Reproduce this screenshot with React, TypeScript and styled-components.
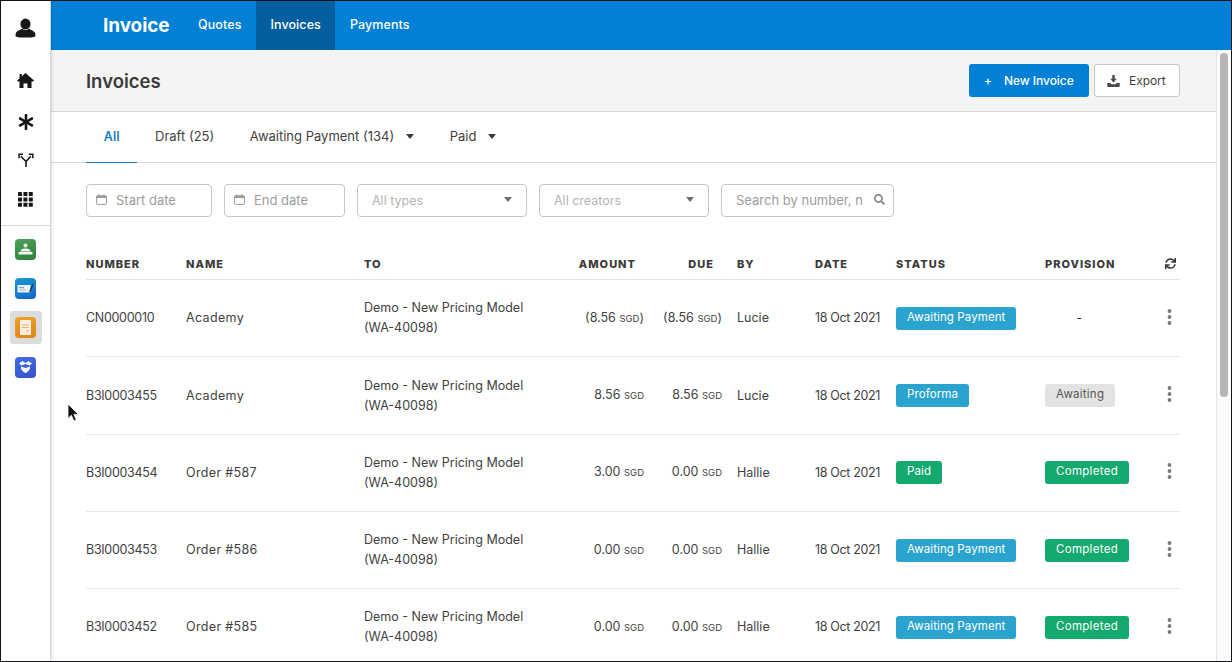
import React from "react";
import styled, { createGlobalStyle } from "styled-components";
import { FaAsterisk, FaSync, FaSearch } from "react-icons/fa";

const Global = createGlobalStyle`
  html, body { margin: 0; padding: 0; background: #fff; }
  body { font-family: Inter, "Open Sans", "Liberation Sans", sans-serif; color: #3b3b3b; }
  * { box-sizing: border-box; }
`;

const Frame = styled.div`
  position: relative;
  width: 1232px;
  height: 662px;
  border: 1px solid #14161c;
  display: flex;
  overflow: hidden;
  background: #fff;
`;

const Sidebar = styled.aside`
  width: 50px;
  flex: none;
  display: flex;
  flex-direction: column;
  align-items: center;
  background: #fff;
  border-right: 1px solid #d6d6d6;
  box-shadow: 1px 0 3px rgba(0, 0, 0, 0.14);
  z-index: 2;
`;

const AvatarSlot = styled.div`
  height: 60px;
  width: 100%;
  display: flex;
  align-items: center;
  justify-content: center;
  padding-bottom: 6px;
`;

const NavIcon = styled.div`
  width: 100%;
  height: 39.7px;
  display: flex;
  align-items: center;
  justify-content: center;
  color: #161616;
`;

const AsteriskSlot = styled(NavIcon)`
  padding-top: 2px;
`;

const SideDivider = styled.div`
  width: 100%;
  height: 1px;
  background: #d9d9d9;
  margin: 5px 0 4px;
`;

const TileSlot = styled.div<{ $active?: boolean }>`
  width: 100%;
  height: 39.3px;
  display: flex;
  align-items: center;
  justify-content: center;
  & > div {
    width: 32px;
    height: 33px;
    border-radius: 3px;
    display: flex;
    align-items: center;
    justify-content: center;
    background: ${(p) => (p.$active ? "#dcdcdc" : "transparent")};
  }
`;

const Tile = styled.div<{ $from: string; $to: string }>`
  width: 21px;
  height: 21px;
  border-radius: 4px;
  background: linear-gradient(160deg, ${(p) => p.$from}, ${(p) => p.$to});
  display: flex;
  align-items: center;
  justify-content: center;
`;

const Main = styled.div`
  flex: 1;
  min-width: 0;
  display: flex;
  flex-direction: column;
`;

const TopBar = styled.header`
  height: 49px;
  flex: none;
  display: flex;
  align-items: stretch;
  background: #0180d6;
  color: #fff;
  padding-left: 52px;
`;

const Brand = styled.div`
  width: 80.5px;
  font-size: 19px;
  font-weight: 700;
  line-height: 49px;
  letter-spacing: -0.1px;
`;

const TopLink = styled.div<{ $active?: boolean }>`
  padding: 0 14.5px;
  font-size: 12.5px;
  font-weight: 500;
  letter-spacing: 0.1px;
  line-height: 48px;
  background: ${(p) => (p.$active ? "#045f9e" : "transparent")};
`;

const Body = styled.div`
  flex: 1;
  min-height: 0;
  display: flex;
`;

const Content = styled.div`
  flex: 1;
  min-width: 0;
  overflow: hidden;
`;

const ScrollTrack = styled.div`
  width: 15px;
  flex: none;
  background: #fafafa;
  border-left: 1px solid #e6e6e6;
  padding: 3px 3px 0 3px;
`;

const ScrollThumb = styled.div`
  width: 8px;
  height: 344px;
  border-radius: 4px;
  background: #b6b6b6;
`;

const PageHead = styled.div`
  height: 62px;
  background: #f4f4f4;
  border-bottom: 1px solid #d9d9d9;
  display: flex;
  align-items: center;
  justify-content: space-between;
  padding: 0 36px 0 35px;
`;

const Title = styled.h1`
  margin: 0;
  font-size: 18.5px;
  font-weight: 600;
  color: #3a3a3a;
`;

const Actions = styled.div`
  display: flex;
  gap: 5px;
`;

const PrimaryButton = styled.button`
  width: 120px;
  height: 33px;
  border: none;
  border-radius: 3px;
  background: #0180d6;
  color: #fff;
  font: 500 12px Inter, sans-serif;
  letter-spacing: -0.05px;
  display: flex;
  align-items: center;
  padding: 0 0 0 15px;
  gap: 12px;
`;

const GhostButton = styled.button`
  width: 86px;
  height: 33px;
  border: 1px solid #c9c9c9;
  border-radius: 3px;
  background: #fff;
  color: #3f3f3f;
  font: 400 12px Inter, sans-serif;
  letter-spacing: -0.05px;
  display: flex;
  align-items: center;
  padding: 0 0 0 12px;
  gap: 9px;
`;

const Tabs = styled.nav`
  height: 51px;
  display: flex;
  align-items: stretch;
  padding-left: 35px;
  border-bottom: 1px solid #d9d9d9;
`;

const Tab = styled.div<{ $active?: boolean }>`
  padding: 0 17.8px 2px;
  display: flex;
  align-items: center;
  gap: 12px;
  font-size: ${(p) => (p.$active ? 12.5 : 13)}px;
  height: 51px;
  font-weight: ${(p) => (p.$active ? 600 : 400)};
  color: ${(p) => (p.$active ? "#1b7fc4" : "#3f3f3f")};
  border-bottom: 1px solid ${(p) => (p.$active ? "#1b7fc4" : "transparent")};
`;

const Caret = styled.span<{ $color?: string }>`
  width: 0;
  height: 0;
  border-left: 4.5px solid transparent;
  border-right: 4.5px solid transparent;
  border-top: 5px solid ${(p) => p.$color ?? "#3a3a3a"};
`;

const Filters = styled.div`
  display: flex;
  gap: 12px;
  padding: 21px 0 0 35px;
`;

const Field = styled.div<{ $w: number; $between?: boolean }>`
  width: ${(p) => p.$w}px;
  height: 33px;
  border: 1px solid #c6c6c6;
  border-radius: 4px;
  background: #fff;
  display: flex;
  align-items: center;
  justify-content: ${(p) => (p.$between ? "space-between" : "flex-start")};
  padding: 0 14px 2px ${(p) => (p.$between ? 14 : 9)}px;
  font-size: 13px;
  color: #9c9c9c;
  gap: 9px;
  white-space: nowrap;
`;

const SelectText = styled.span`
  color: #b4b4b4;
  font-size: 12.5px;
  padding-top: 2px;
`;

const SearchText = styled.span`
  width: 126px;
  flex: none;
  margin: 0 3px 0 5px;
`;

const Table = styled.div`
  margin: 33px 0 0 35px;
  width: 1094px;
`;

const columns = "100px 178px 195px 85px 78px 93px 81px 149px 113px 22px";

const HeadRow = styled.div`
  display: grid;
  grid-template-columns: ${columns};
  height: 30px;
  padding-bottom: 2px;
  align-items: center;
  border-bottom: 1px solid #e2e2e2;
`;

const Th = styled.div<{ $right?: boolean; $pad?: number }>`
  font-size: 11px;
  font-weight: 800;
  letter-spacing: 1px;
  color: #3a3a3a;
  text-align: ${(p) => (p.$right ? "right" : "left")};
  padding-right: ${(p) => (p.$right ? 8 : 0)}px;
  padding-left: ${(p) => p.$pad ?? 0}px;
`;

const Row = styled.div`
  display: grid;
  grid-template-columns: ${columns};
  height: 77.25px;
  padding-top: 0.5px;
  align-items: center;
  border-bottom: 1px solid #e6e6e6;
  font-size: 12.5px;
  color: #3f3f3f;
`;

const Cell = styled.div<{ $right?: boolean; $pad?: number; $ls?: number }>`
  text-align: ${(p) => (p.$right ? "right" : "left")};
  padding-left: ${(p) => p.$pad ?? 0}px;
  letter-spacing: ${(p) => p.$ls ?? 0}px;
  line-height: 20px;
  white-space: nowrap;
`;

const Currency = styled.span`
  font-size: 9.5px;
  font-weight: 400;
`;

const Pill = styled.span<{ $bg: string; $fg?: string; $ls?: number }>`
  display: inline-block;
  height: 23px;
  line-height: 21px;
  padding: 0 11px;
  border-radius: 3px;
  background: ${(p) => p.$bg};
  color: ${(p) => p.$fg ?? "#fff"};
  font-size: 11.5px;
  font-weight: 400;
  letter-spacing: ${(p) => p.$ls ?? 0.1}px;
`;

const Dash = styled.span`
  display: inline-block;
  width: 68px;
  text-align: center;
`;

const Kebab = styled.div`
  display: flex;
  justify-content: center;
  padding-bottom: 3px;
  height: 20px;
  align-items: center;
`;

const RefreshSlot = styled.div`
  display: flex;
  justify-content: center;
  padding-left: 3px;
`;

const Cursor = styled.svg`
  position: absolute;
  left: 66px;
  top: 402px;
  z-index: 5;
`;

const UserIcon = () => (
  <svg width="21" height="20" viewBox="0 0 24 23" fill="#171717">
    <ellipse cx="12" cy="7" rx="5.800" ry="6.300" />
    <path d="M8 12.500c-1 1-6.600 2.400-7.200 5.200-.2 1-.3 2.300-.2 3.200.9 1 3.500 1.600 11.400 1.600s10.500-.6 11.400-1.600c.1-.9 0-2.200-.2-3.200-.6-2.800-6.200-4.200-7.200-5.200-1 1-2.500 1.700-4 1.700s-3-.7-4-1.700z" />
  </svg>
);

const HomeIcon = () => (
  <svg width="17" height="15" viewBox="0 0 17 15" fill="#171717">
    <path d="M8.500 0 17 7.600l-.9 1H14.500V15h-4v-4.600h-4V15h-4V8.600H.9L0 7.600 2.500 5.400V1h2.400v2.200z" />
  </svg>
);

const ForkIcon = () => (
  <svg width="16" height="14" viewBox="0 0 16 14" fill="none" stroke="#171717" strokeWidth="1.600">
    <path d="M8 14V8.500L2.800 3.200" />
    <path d="M8 8.500 12.800 3.200" />
    <path d="M1 5.200V1.300h3.900" strokeWidth="1.500" />
    <path d="M10.800 1.300h4v3.900" strokeWidth="1.500" />
  </svg>
);

const GridIcon = () => (
  <svg width="15" height="15" viewBox="0 0 15 15" fill="#171717">
    {[0, 5.4, 10.8].flatMap((y) =>
      [0, 5.4, 10.8].map((x) => <rect key={`${x}-${y}`} x={x} y={y} width="4" height="4" rx="0.400" />)
    )}
  </svg>
);

const CalendarIcon = () => (
  <svg width="11" height="11" viewBox="0 0 11 11" fill="none">
    <rect x="0.600" y="1.800" width="9.800" height="8.600" rx="0.800" stroke="#9a9a9a" strokeWidth="1" fill="#fff" />
    <rect x="0.600" y="1.800" width="9.800" height="2.200" fill="#9a9a9a" />
    <path d="M3 .3v2M8 .3v2" stroke="#9a9a9a" strokeWidth="1.100" />
  </svg>
);

const ExportIcon = () => (
  <svg width="13" height="12" viewBox="0 0 13 12" fill="#4a4a4a">
    <path d="M5.300 0h2.400v3.800h2L6.500 7.400 3.300 3.800h2z" />
    <path d="M0.300 8h2.900l1.400 1.300h3.800L9.800 8h2.900v3.300a.7.7 0 0 1-.7.700H1a.7.7 0 0 1-.7-.7z" />
  </svg>
);

const KebabIcon = () => (
  <svg width="5" height="16" viewBox="0 0 5 16" fill="#7a7a7a">
    <circle cx="2.500" cy="2" r="1.900" />
    <circle cx="2.500" cy="8" r="1.900" />
    <circle cx="2.500" cy="14" r="1.900" />
  </svg>
);

const CursorArrow = () => (
  <Cursor width="12" height="20" viewBox="0 0 12 20">
    <path d="M1 1v14.500l3.400-3.200 2.400 5.700 2.500-1.100-2.400-5.500h4.600z" fill="#111" stroke="#fff" strokeWidth="0.800" />
  </Cursor>
);

const GreenGlyph = () => (
  <svg width="15" height="13" viewBox="0 0 15 13" fill="#f2f7f0">
    <circle cx="7.500" cy="2.500" r="2" />
    <path d="M3 7c1-2 8-2 9 0l1 1.500H2z" />
    <rect x="0.500" y="9" width="14" height="2.500" rx="0.600" />
  </svg>
);

const BlueGlyph = () => (
  <svg width="17" height="11" viewBox="0 0 17 11">
    <rect x="0.500" y="2" width="13" height="7.500" fill="#e8f1f7" />
    <rect x="2" y="4" width="5" height="1.200" fill="#7fa8c8" />
    <rect x="2" y="6.500" width="7" height="1" fill="#a8c4da" />
    <path d="M12 9l3.500-8 1.200.5-3.400 8z" fill="#1f2a5c" />
  </svg>
);

const OrangeGlyph = () => (
  <svg width="11" height="15" viewBox="0 0 11 15">
    <rect width="11" height="15" rx="1" fill="#fbeede" />
    <path d="M2 5h7M2 7.500h7M6 11h3" stroke="#e3b27a" strokeWidth="1" />
  </svg>
);

const PurpleGlyph = () => (
  <svg width="13" height="12" viewBox="0 0 13 12" fill="#f3f5ff">
    <path d="M0 2.500 3.500 0l3 2 3-2L13 2.500 10.500 4.500 6.500 3l-4 1.500z" />
    <path d="M2 5.500l4.500 1.500L11 5.500v2.300C10 10 8 11.500 6.500 12 5 11.500 3 10 2 7.800z" />
  </svg>
);

type Inv = {
  number: string; name: string; amount: string; due: string; by: string;
  status: "Awaiting Payment" | "Proforma" | "Paid"; provision: "-" | "Awaiting" | "Completed";
};

const rows: Inv[] = [
  { number: "CN0000010", name: "Academy", amount: "(8.56|)", due: "(8.56|)", by: "Lucie", status: "Awaiting Payment", provision: "-" },
  { number: "B3I0003455", name: "Academy", amount: "8.56|", due: "8.56|", by: "Lucie", status: "Proforma", provision: "Awaiting" },
  { number: "B3I0003454", name: "Order #587", amount: "3.00|", due: "0.00|", by: "Hallie", status: "Paid", provision: "Completed" },
  { number: "B3I0003453", name: "Order #586", amount: "0.00|", due: "0.00|", by: "Hallie", status: "Awaiting Payment", provision: "Completed" },
  { number: "B3I0003452", name: "Order #585", amount: "0.00|", due: "0.00|", by: "Hallie", status: "Awaiting Payment", provision: "Completed" },
];

const Money = ({ v }: { v: string }) => {
  const [a, b] = v.split("|");
  return (
    <>
      {a} <Currency>SGD</Currency>
      {b}
    </>
  );
};

export default function App() {
  return (
    <>
      <Global />
      <Frame>
        <Sidebar>
          <AvatarSlot><UserIcon /></AvatarSlot>
          <NavIcon><HomeIcon /></NavIcon>
          <AsteriskSlot><FaAsterisk size={16} /></AsteriskSlot>
          <NavIcon><ForkIcon /></NavIcon>
          <NavIcon><GridIcon /></NavIcon>
          <SideDivider />
          <TileSlot><div><Tile $from="#4aa257" $to="#2f7f3c"><GreenGlyph /></Tile></div></TileSlot>
          <TileSlot><div><Tile $from="#1b9ad0" $to="#1565c8"><BlueGlyph /></Tile></div></TileSlot>
          <TileSlot $active><div><Tile $from="#f0a02c" $to="#df8418"><OrangeGlyph /></Tile></div></TileSlot>
          <TileSlot><div><Tile $from="#3f6fe0" $to="#3a50cc"><PurpleGlyph /></Tile></div></TileSlot>
        </Sidebar>
        <Main>
          <TopBar>
            <Brand>Invoice</Brand>
            <TopLink>Quotes</TopLink>
            <TopLink $active>Invoices</TopLink>
            <TopLink>Payments</TopLink>
          </TopBar>
          <Body>
            <Content>
              <PageHead>
                <Title>Invoices</Title>
                <Actions>
                  <PrimaryButton><span>+</span>New Invoice</PrimaryButton>
                  <GhostButton><ExportIcon />Export</GhostButton>
                </Actions>
              </PageHead>
              <Tabs>
                <Tab $active>All</Tab>
                <Tab>Draft (25)</Tab>
                <Tab>Awaiting Payment (134)<Caret /></Tab>
                <Tab>Paid<Caret /></Tab>
              </Tabs>
              <Filters>
                <Field $w={126}><CalendarIcon />Start date</Field>
                <Field $w={121}><CalendarIcon />End date</Field>
                <Field $w={170} $between><SelectText>All types</SelectText><Caret $color="#6f6f6f" /></Field>
                <Field $w={170} $between><SelectText>All creators</SelectText><Caret $color="#6f6f6f" /></Field>
                <Field $w={173}>
                  <SearchText>Search by number, n</SearchText>
                  <FaSearch size={11} color="#8a8a8a" style={{ flex: "none" }} />
                </Field>
              </Filters>
              <Table>
                <HeadRow>
                  <Th>NUMBER</Th>
                  <Th>NAME</Th>
                  <Th>TO</Th>
                  <Th $right>AMOUNT</Th>
                  <Th $right>DUE</Th>
                  <Th $pad={15}>BY</Th>
                  <Th>DATE</Th>
                  <Th>STATUS</Th>
                  <Th>PROVISION</Th>
                  <RefreshSlot><FaSync size={11} color="#333" /></RefreshSlot>
                </HeadRow>
                {rows.map((r) => (
                  <Row key={r.number}>
                    <Cell $ls={-0.3}>{r.number}</Cell>
                    <Cell $ls={0.35}>{r.name}</Cell>
                    <Cell>Demo - New Pricing Model<br />(WA-40098)</Cell>
                    <Cell $right><Money v={r.amount} /></Cell>
                    <Cell $right><Money v={r.due} /></Cell>
                    <Cell $pad={15}>{r.by}</Cell>
                    <Cell $ls={-0.35}>18 Oct 2021</Cell>
                    <Cell>
                      <Pill $bg={r.status === "Paid" ? "#14a96e" : "#2ba3cf"}>{r.status}</Pill>
                    </Cell>
                    <Cell>
                      {r.provision === "-" && <Dash>-</Dash>}
                      {r.provision === "Awaiting" && <Pill $bg="#e3e3e3" $fg="#555" $ls={0.25}>Awaiting</Pill>}
                      {r.provision === "Completed" && <Pill $bg="#14a96e" $ls={0.3}>Completed</Pill>}
                    </Cell>
                    <Kebab><KebabIcon /></Kebab>
                  </Row>
                ))}
              </Table>
            </Content>
            <ScrollTrack><ScrollThumb /></ScrollTrack>
          </Body>
        </Main>
        <CursorArrow />
      </Frame>
    </>
  );
}
